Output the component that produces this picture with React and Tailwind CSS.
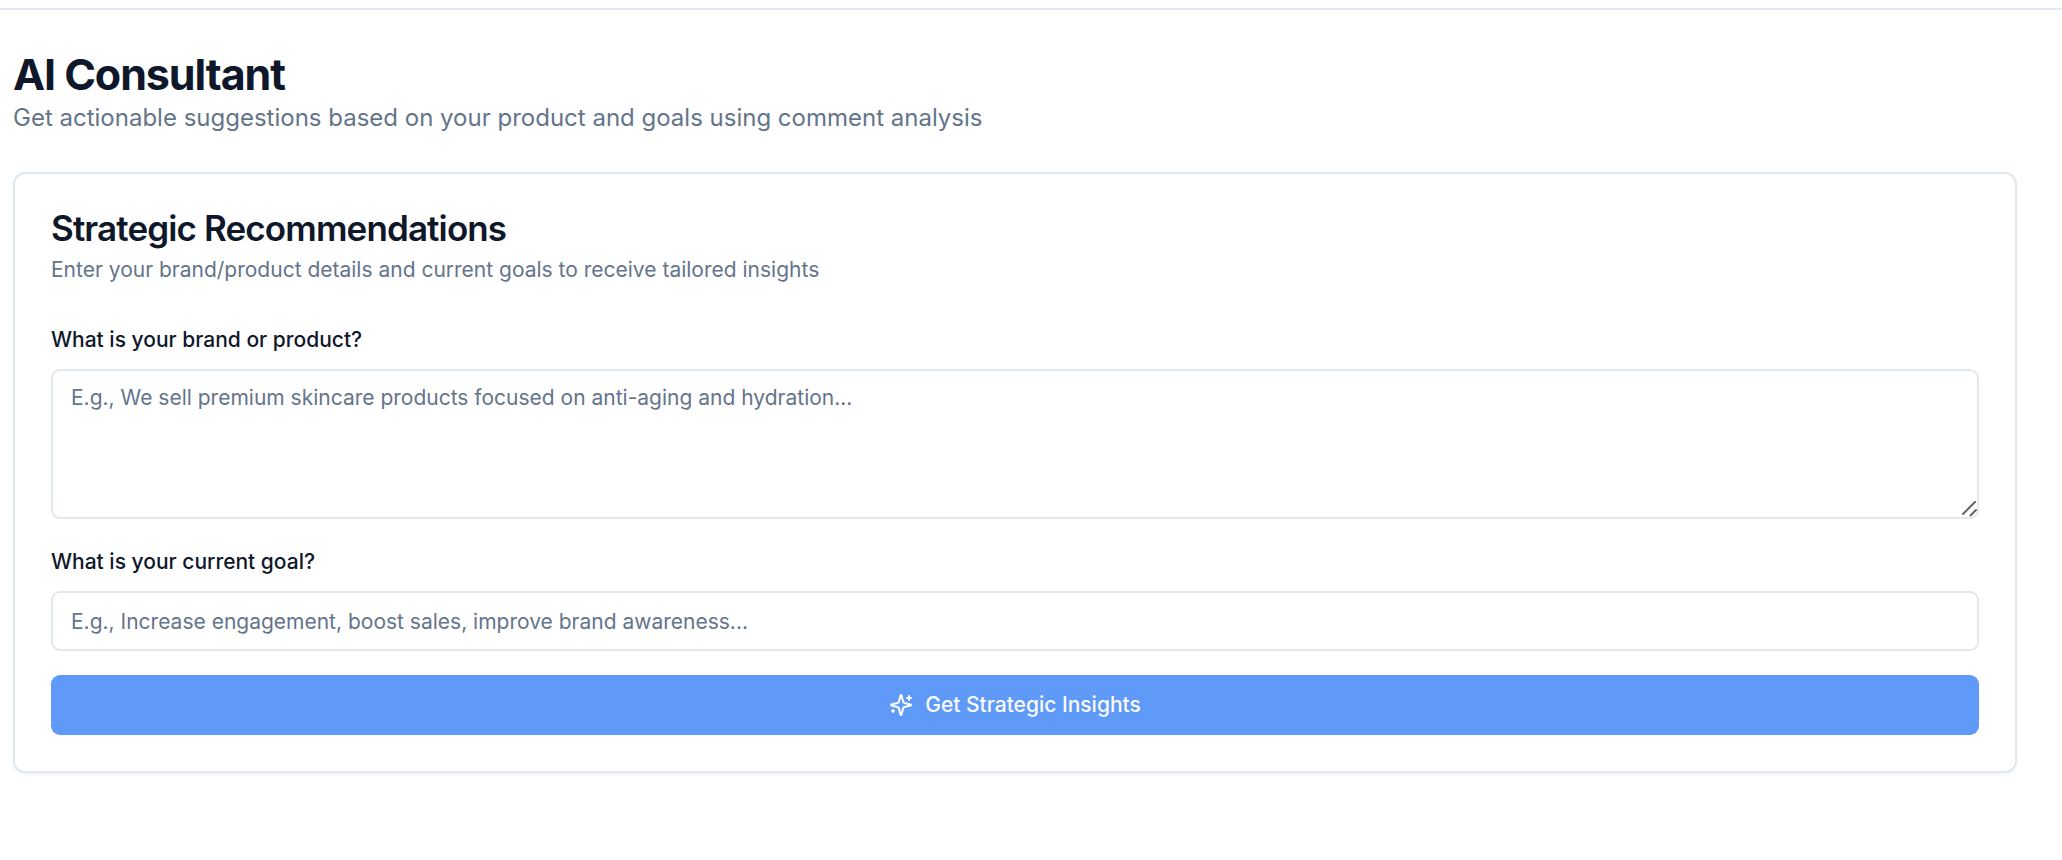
import React from "react";
import { useState } from "react";

const SparklesIcon = () => (
  <svg
    className="size-6 shrink-0"
    viewBox="0 0 24 24"
    fill="none"
    stroke="currentColor"
    strokeWidth="2"
    strokeLinecap="round"
    strokeLinejoin="round"
    aria-hidden="true"
  >
    <path d="M9.937 15.5A2 2 0 0 0 8.5 14.063l-6.135-1.582a.5.5 0 0 1 0-.962L8.5 9.936A2 2 0 0 0 9.937 8.5l1.582-6.135a.5.5 0 0 1 .963 0L14.063 8.5A2 2 0 0 0 15.5 9.937l6.135 1.581a.5.5 0 0 1 0 .964L15.5 14.063a2 2 0 0 0-1.437 1.437l-1.582 6.135a.5.5 0 0 1-.963 0z" />
    <path d="M20 3v4" />
    <path d="M22 5h-4" />
    <path d="M4 17v2" />
    <path d="M5 18H3" />
  </svg>
);

const App = () => {
  const [product, setProduct] = useState("");
  const [goal, setGoal] = useState("");

  const submitHandle = (e) => {
    e.preventDefault();
  };

  return (
    <div className="min-h-screen bg-white pt-2 font-['Inter',sans-serif] text-[24px] leading-9 text-[#0f172a]">
      <div className="border-t-2 border-[#e2e8f0]" />
      <main className="flex flex-col gap-9 pt-[38px] pr-[45px] pb-9 pl-[13px]">
        <div>
          <h1 className="text-[43px] leading-[52px] font-bold tracking-tight">
            AI Consultant
          </h1>
          <p className="text-[#64748b]">
            Get actionable suggestions based on your product and goals using
            comment analysis
          </p>
        </div>

        {/**Recommendations card */}
        <section className="rounded-xl border-2 border-[#e2e8f0] bg-white p-9 shadow-[0_2px_3px_rgba(0,0,0,0.05)]">
          <div className="flex flex-col gap-[9px] pb-9">
            <h2 className="text-[35px] leading-9 font-semibold tracking-tight">
              Strategic Recommendations
            </h2>
            <p className="text-[21px] leading-[30px] text-[#64748b]">
              Enter your brand/product details and current goals to receive
              tailored insights
            </p>
          </div>
          <form className="flex flex-col gap-6" onSubmit={submitHandle}>
            <div className="flex flex-col gap-2.5">
              <label
                htmlFor="product"
                className="text-[21px] leading-[38px] font-medium"
              >
                What is your brand or product?
              </label>
              <div className="relative">
                <textarea
                  id="product"
                  className="block min-h-[150px] w-full resize-y rounded-[9px] border-2 border-[#e2e8f0] bg-white px-[18px] py-3 text-[21px] leading-[30px] placeholder:text-[#64748b] [&::-webkit-resizer]:hidden"
                  placeholder="E.g., We sell premium skincare products focused on anti-aging and hydration..."
                  value={product}
                  onChange={(e) => setProduct(e.target.value)}
                />
                {/**resize grip */}
                <svg
                  className="pointer-events-none absolute right-0.5 bottom-0.5 size-4"
                  viewBox="0 0 16 16"
                  fill="none"
                  stroke="#646464"
                  strokeWidth="2"
                  strokeLinecap="round"
                  aria-hidden="true"
                >
                  <path d="M2 13 14 1M9.5 14.500 15 9" />
                </svg>
              </div>
            </div>
            <div className="flex flex-col gap-2.5">
              <label
                htmlFor="goal"
                className="text-[21px] leading-[38px] font-medium"
              >
                What is your current goal?
              </label>
              <input
                id="goal"
                type="text"
                className="h-[60px] w-full rounded-[9px] border-2 border-[#e2e8f0] bg-white px-[18px] py-3 text-[21px] leading-[30px] placeholder:text-[#64748b]"
                placeholder="E.g., Increase engagement, boost sales, improve brand awareness..."
                value={goal}
                onChange={(e) => setGoal(e.target.value)}
              />
            </div>
            <button
              type="submit"
              className="flex h-[60px] w-full cursor-pointer items-center justify-center gap-3 rounded-[9px] bg-[#609af8] text-[21px] leading-[30px] font-medium text-slate-50"
            >
              <SparklesIcon />
              Get Strategic Insights
            </button>
          </form>
        </section>
      </main>
    </div>
  );
};

export default App;
